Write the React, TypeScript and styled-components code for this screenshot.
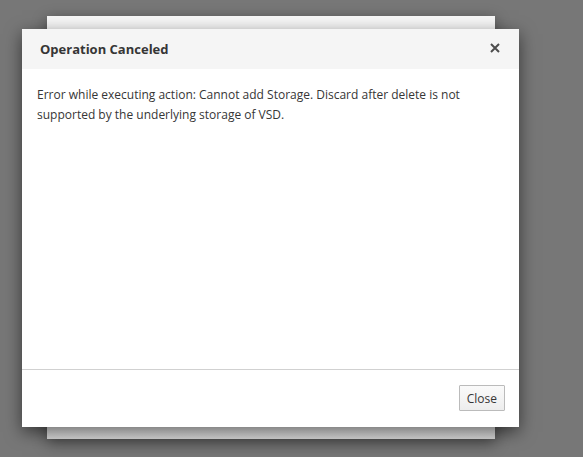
import styled, { createGlobalStyle } from "styled-components";

const GlobalStyle = createGlobalStyle`
  html, body {
    margin: 0;
    padding: 0;
    background: #777777;
    font-family: "Open Sans", "Liberation Sans", sans-serif;
  }
`;

const App = () => {
  return (
    <>
      <GlobalStyle />
      <Backdrop>
        <BackCard />
        <Modal>
          <Header>
            <Title>Operation Canceled</Title>
            <CloseX aria-label="Close">
              <svg width="10" height="10" viewBox="0 0 10 10">
                <path d="M1 1L9 9M9 1L1 9" stroke="#4d4d4d" strokeWidth="2" />
              </svg>
            </CloseX>
          </Header>
          <Body>
            Error while executing action: Cannot add Storage. Discard after delete is not
            supported by the underlying storage of VSD.
          </Body>
          <Footer>
            <Button>Close</Button>
          </Footer>
        </Modal>
      </Backdrop>
    </>
  );
};

export default App;

const Backdrop = styled.div`
  position: relative;
  width: 583px;
  height: 457px;
  overflow: hidden;
  background: #777777;
`;

const BackCard = styled.div`
  position: absolute;
  left: 47px;
  top: 16px;
  width: 448px;
  height: 423px;
  background: linear-gradient(to bottom, #f6f6f6 0, #f6f6f6 91%, #d9d9d9 100%);
  box-shadow: 0 4px 14px rgba(0, 0, 0, 0.45);
`;

const Modal = styled.div`
  position: absolute;
  left: 22px;
  top: 29px;
  width: 497px;
  height: 398px;
  display: flex;
  flex-direction: column;
  background: #ffffff;
  box-shadow: 0 5px 16px rgba(0, 0, 0, 0.55);
`;

const Header = styled.div`
  display: flex;
  align-items: center;
  justify-content: space-between;
  height: 40px;
  padding: 0 17px 0 18px;
  background: #f5f5f5;
`;

const Title = styled.h4`
  margin: 0;
  font-size: 13px;
  font-weight: 700;
  line-height: 20px;
  color: #363636;
`;

const CloseX = styled.button`
  display: flex;
  align-items: center;
  justify-content: center;
  width: 14px;
  height: 14px;
  margin-top: -3px;
  padding: 0;
  border: none;
  background: transparent;
`;

const Body = styled.div`
  flex: 1;
  padding: 16px 15px;
  font-size: 12px;
  line-height: 19.5px;
  color: #363636;
`;

const Footer = styled.div`
  display: flex;
  justify-content: flex-end;
  height: 58px;
  padding: 15px 14px 0;
  border-top: 1px solid #d1d1d1;
  box-sizing: border-box;
`;

const Button = styled.button`
  height: 26px;
  padding: 0 7px;
  font-family: "Open Sans", "Liberation Sans", sans-serif;
  font-size: 12px;
  color: #363636;
  background: linear-gradient(to bottom, #fafafa 0, #ededed 100%);
  border: 1px solid #bbbbbb;
  border-radius: 1px;
`;
